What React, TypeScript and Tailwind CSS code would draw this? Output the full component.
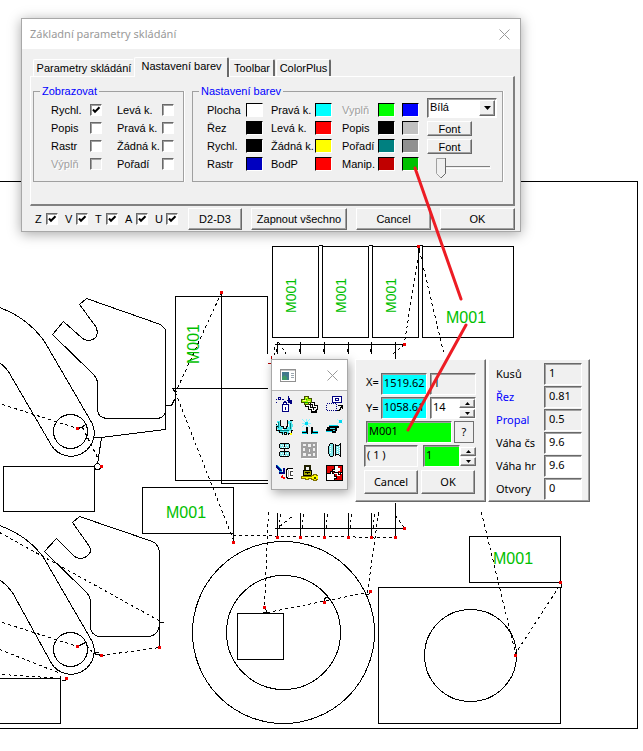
import clsx from 'clsx'
import { useState, type ReactNode } from 'react'

const RAISED =
  'border border-t-white border-l-white border-b-[#696969] border-r-[#696969] shadow-[inset_-1px_-1px_0_#a0a0a0] bg-[#f0f0f0]'
const SUNKEN =
  'border border-t-[#696969] border-l-[#696969] border-b-white border-r-white shadow-[inset_1px_1px_0_#a0a0a0]'
const DIALOG_FONT = "font-['Liberation_Sans',Arial,sans-serif] text-[11px] leading-[14px]"
const PANEL_FONT = "font-['Noto_Sans',Tahoma,sans-serif] text-[11px] leading-[14px]"

const TABS = ['Parametry skládání', 'Nastavení barev', 'Toolbar', 'ColorPlus']

const VISIBILITY = [
  { label: 'Rychl.', checked: true },
  { label: 'Levá k.' },
  { label: 'Popis' },
  { label: 'Pravá k.' },
  { label: 'Rastr' },
  { label: 'Žádná k.' },
  { label: 'Výplň', disabled: true },
  { label: 'Pořadí' },
]

const COLOR_ROWS = [
  [
    { label: 'Plocha', color: 'bg-white' },
    { label: 'Pravá k.', color: 'bg-[#00ffff]' },
    { label: 'Vyplň', color: 'bg-[#00ff00]', disabled: true },
    { label: '', color: 'bg-[#0000ff]' },
  ],
  [
    { label: 'Řez', color: 'bg-black' },
    { label: 'Levá k.', color: 'bg-[#ff0000]' },
    { label: 'Popis', color: 'bg-black' },
    { label: '', color: 'bg-[#c0c0c0]' },
  ],
  [
    { label: 'Rychl.', color: 'bg-black' },
    { label: 'Žádná k.', color: 'bg-[#ffff00]' },
    { label: 'Pořadí', color: 'bg-[#008080]' },
    { label: '', color: 'bg-[#909090]' },
  ],
  [
    { label: 'Rastr', color: 'bg-[#0000c0]' },
    { label: 'BodP', color: 'bg-[#ff0000]' },
    { label: 'Manip.', color: 'bg-[#c00000]' },
    { label: '', color: 'bg-[#00c000]' },
  ],
]

const COLOR_LABEL_WIDTHS = ['w-[39px]', 'w-[44px]', 'w-[36px]', 'w-0']

const STATS = [
  { label: 'Kusů', value: '1', readOnly: true },
  { label: 'Řez', value: '0.81', readOnly: true, blue: true },
  { label: 'Propal', value: '0.5', readOnly: true, blue: true },
  { label: 'Váha čs', value: '9.6' },
  { label: 'Váha hr', value: '9.6' },
  { label: 'Otvory', value: '0' },
]

const COMB_X = [277, 300, 324, 348, 371, 395]

const RED_POINTS = [
  [77, 428],
  [101, 466],
  [221, 292],
  [77, 646],
  [101, 655],
  [159, 647],
  [66, 678],
  [233, 542],
  [404, 344],
  [404, 528],
  [264, 607],
  [324, 602],
  [370, 591],
  [515, 655],
  [418, 246],
  [560, 582],
  ...COMB_X.map((x) => [x, 537]),
]

function Drawing() {
  return (
    <svg
      width="643"
      height="751"
      className="absolute top-0 left-0"
      shapeRendering="crispEdges"
      aria-label="Nesting plan"
    >
      <g transform="translate(0.5 0.5)" fill="none" stroke="#000">
        {/* sheet outline */}
        <path d="M-1 181H637V728H-1" />

        {/* arms with a hole */}
        <path d="M-1 307C18 314 34 327 44 341L90 420A23 23 0 0 1 51 445L12 378Q7 368 -1 362" />
        <circle cx="70" cy="431" r="17" />
        <path d="M-1 525C18 532 33 543 43 557L90 638A23 23 0 0 1 51 663L12 592Q7 585 -1 579" />
        <circle cx="70" cy="649" r="17" />

        {/* hooks */}
        <path d="M86 298L160 324L165 329V412Q162 418 156 418H106Q98 417 97 410V383Q97 378 92 373L52 334L63 321L82 338Q88 342 94 338Q98 335 96 327L79 304Z" />
        <path d="M79 516L152 541Q158 544 159 552V625Q157 635 149 636H98Q91 634 90 628V602Q90 596 85 591L44 551L56 538L74 556Q80 560 86 556Q92 552 89 546L72 522Z" />
        <path d="M165 405V429L101 437L97 464M93 437L101 437M159 620V647" />
        <path d="M165 405H171L174 399M85 424L81 427L77 428M85 642L77 646M93 653L101 655M93 652H98" />
        <circle cx="97" cy="466" r="3" />

        {/* rectangular parts */}
        <rect x="3" y="466" width="91" height="45" />
        <path d="M-1 678H60V723H-1M60 675V680M61 680H65" />
        <rect x="142" y="487" width="91" height="46" />
        <path d="M267 296H175V480H267M221 292V483H267M172 388H267M267 296V353M172 388L175 392" />
        <rect x="272" y="246" width="46" height="91" />
        <rect x="322" y="246" width="46" height="91" />
        <rect x="372" y="246" width="46" height="91" />
        <rect x="422" y="246" width="91" height="91" />
        <path d="M318 245H322M368 245H372M418 245H422" />
        <rect x="469" y="536" width="91" height="46" />
        <rect x="378" y="587" width="182" height="136" />
        <path d="M561 582V587" />
        <circle cx="470" cy="655" r="46" />
        <circle cx="283" cy="632" r="91" />
        <circle cx="283" cy="632" r="57" />
        <rect x="237" y="613" width="46" height="46" />

        {/* combs */}
        <path d="M274 344H404M274 528H404M395 353V359M395 502V512" />
        {COMB_X.map((x) => (
          <path key={x} d={`M${x} 341V353M${x} 512V537`} />
        ))}
        {COMB_X.slice(0, 5).map((x) => (
          <path key={x} strokeDasharray="3 3" d={`M${x + 2} 528L${x + 3} 512M${x - 1} 348V354`} />
        ))}
        <path d="M233 533V542M264 607L267 612H262M324 602V598Q327 596 329 599M370 591Q369 596 365 593" />

        {/* rapid moves */}
        <g strokeDasharray="3 3">
          <path d="M2 404L77 428M82 427L97 457" />
          <path d="M221 292L175 392M175 392L233 540" />
          <path d="M-1 532L162 622M2 622L77 646M-1 649L60 673M2 674L61 678" />
          <path d="M86 645L93 653M101 655L159 647" />
          <path d="M419 248L404 342M419 250L443 352M404 344L393 353" />
          <path d="M233 535L395 537M268 512L264 605M378 512L367 592L267 612" />
          <path d="M279 526L294 514M395 515L404 528M274 346V354M278 342L286 354" />
          <path d="M481 512L515 653L560 584" />
        </g>
        <path d="M158 622H163" />
        <path stroke="#b00000" d="M271 355V363H267" />
      </g>

      <g fill="#f00000">
        {RED_POINTS.map(([x, y]) => (
          <rect key={`${x}-${y}`} x={x - 1} y={y - 1} width="3" height="3" />
        ))}
      </g>

      <g fill="#00c000" className="font-['Liberation_Sans',Arial,sans-serif] text-[16px]">
        <text x="166" y="518">M001</text>
        <text x="446" y="323">M001</text>
        <text x="493" y="564">M001</text>
        <text transform="translate(199 364) rotate(-90)">M001</text>
        <g className="text-[14px]">
          <text transform="translate(296 313) rotate(-90)">M001</text>
          <text transform="translate(346 313) rotate(-90)">M001</text>
          <text transform="translate(396 313) rotate(-90)">M001</text>
        </g>
      </g>
    </svg>
  )
}

interface CheckProps {
  label: string
  checked?: boolean
  disabled?: boolean
  labelClass?: string
}

function Check({ label, checked = false, disabled = false, labelClass }: CheckProps) {
  return (
    <label className="flex h-[18px] items-center whitespace-nowrap">
      <span
        className={clsx(labelClass, disabled && 'text-[#a0a0a0] [text-shadow:1px_1px_0_#fff]')}
      >
        {label}
      </span>
      <span className="grid size-3 shrink-0">
        <input
          type="checkbox"
          defaultChecked={checked}
          disabled={disabled}
          className={clsx(
            'peer col-start-1 row-start-1 size-3 appearance-none',
            SUNKEN,
            disabled ? 'bg-[#f0f0f0]' : 'bg-white'
          )}
        />
        <svg
          viewBox="0 0 12 12"
          className="pointer-events-none col-start-1 row-start-1 hidden size-3 peer-checked:block"
        >
          <path d="M3 5.5L5 7.8L9.5 3.3" fill="none" stroke="#000" strokeWidth="2" />
        </svg>
      </span>
    </label>
  )
}

function PushButton({ children, className }: { children: ReactNode; className?: string }) {
  return (
    <button
      type="button"
      className={clsx('flex items-center justify-center whitespace-nowrap', RAISED, className)}
    >
      {children}
    </button>
  )
}

function CloseIcon() {
  return (
    <svg viewBox="0 0 11 11" className="size-[11px]">
      <path d="M.5 .5L10.5 10.5M10.5 .5L.5 10.5" stroke="#999" fill="none" />
    </svg>
  )
}

function LevelSlider() {
  const [level, setLevel] = useState(0)
  return (
    <div className="grid h-[22px] w-[56px]">
      <svg viewBox="0 0 56 22" className="col-start-1 row-start-1 h-[22px] w-[56px]">
        <path d="M6 9.5H55M6.5 9V11" stroke="#808080" strokeWidth="1" />
        <path d="M6 11.5H56V9" stroke="#fff" fill="none" />
        <g transform={`translate(${level * 0.44} 0)`}>
          <path d="M1.500 1.500H10.500V16.500L6 21L1.500 16.500Z" fill="#f0f0f0" stroke="#a0a0a0" />
          <path d="M10.500 1V16.500L6 21" fill="none" stroke="#696969" />
        </g>
      </svg>
      <input
        type="range"
        aria-label="Jas"
        value={level}
        onChange={(e) => setLevel(Number(e.target.value))}
        className="col-start-1 row-start-1 w-full opacity-0"
      />
    </div>
  )
}

function SettingsDialog() {
  return (
    <section
      className={clsx(
        'absolute top-[18px] left-[21px] w-[500px] border border-[#a8a8a8] bg-[#f0f0f0] pb-px shadow-[0_2px_12px_rgba(0,0,0,0.35)]',
        DIALOG_FONT
      )}
    >
      <header className="flex h-[30px] items-center justify-between bg-white pr-[10px] pl-2">
        <h1 className="font-['Noto_Sans','Segoe_UI',sans-serif] text-[11px] text-[#999]">
          Základní parametry skládání
        </h1>
        <button type="button" aria-label="Zavřít">
          <CloseIcon />
        </button>
      </header>

      <div role="tablist" className="flex h-[27px] items-end pl-[11px] whitespace-nowrap">
        {TABS.map((tab, i) => (
          <button
            key={tab}
            type="button"
            role="tab"
            aria-selected={i === 1}
            className={clsx(
              'rounded-t-xs border border-b-0 border-t-white border-l-white border-r-[#696969] pl-px',
              i === 0 && 'h-[17px] w-[101px] border-r-transparent',
              i === 1 && 'relative -mb-px h-5 w-[95px] border-r-2 bg-[#f0f0f0] pb-[3px]',
              i === 2 && 'h-[17px] w-[46px] border-r-2',
              i === 3 && 'ml-px h-[17px] w-[55px] border-r-2'
            )}
          >
            {tab}
          </button>
        ))}
      </div>

      <div className="mr-[5px] ml-2 flex h-[130px] items-start gap-2 border border-t-white border-r-2 border-b-2 border-l-white border-r-[#808080] border-b-[#808080] pt-[7px] pl-[2px]">
        <fieldset className="h-[98px] w-[151px] border border-[#a0a0a0] pl-[17px] shadow-[1px_0_0_#fff]">
          <legend className="-ml-[11px] px-[2px] text-[#0000ff]">Zobrazovat</legend>
          <div className="grid grid-cols-[66px_58px] pt-[3px]">
            {VISIBILITY.map((v, i) => (
              <Check key={v.label} {...v} labelClass={i % 2 === 0 ? 'w-[39px]' : 'w-[45px]'} />
            ))}
          </div>
        </fieldset>

        <fieldset className="h-[98px] w-[311px] border border-[#a0a0a0] pl-[14px] shadow-[1px_0_0_#fff]">
          <legend className="-ml-[8px] px-[2px] text-[#0000ff]">Nastavení barev</legend>
          <div className="flex gap-2">
            <div className="pt-[3px]">
              {COLOR_ROWS.map((row, r) => (
                <div key={r} className="grid h-[18px] grid-cols-[64px_71px_60px_17px] items-center">
                  {row.map((cell, c) => (
                    <div key={c} className="flex items-center whitespace-nowrap">
                      <span
                        className={clsx(
                          COLOR_LABEL_WIDTHS[c],
                          cell.disabled && 'text-[#a0a0a0] [text-shadow:1px_1px_0_#fff]'
                        )}
                      >
                        {cell.label}
                      </span>
                      <button
                        type="button"
                        aria-label={`Barva ${cell.label}`}
                        className={clsx(
                          'h-[14px] w-[17px] shrink-0 border border-t-black border-r-white border-b-white border-l-black',
                          cell.color
                        )}
                      />
                    </div>
                  ))}
                </div>
              ))}
            </div>

            <div className="flex flex-col items-start gap-[3px]">
              <div className={clsx('grid h-5 w-[70px] bg-white', SUNKEN)}>
                <select
                  aria-label="Barva pozadí"
                  className="col-start-1 row-start-1 appearance-none pb-[2px] pl-[2px] outline-none"
                >
                  <option>Bílá</option>
                </select>
                <span
                  className={clsx(
                    'pointer-events-none col-start-1 row-start-1 my-px mr-px flex w-4 items-center justify-center justify-self-end',
                    RAISED
                  )}
                >
                  <svg viewBox="0 0 7 4" className="h-1 w-[7px]">
                    <path d="M0 0H7L3.500 4Z" />
                  </svg>
                </span>
              </div>
              <PushButton className="h-[15px] w-[45px]">Font</PushButton>
              <PushButton className="h-[15px] w-[45px]">Font</PushButton>
              <div className="pl-2">
                <LevelSlider />
              </div>
            </div>
          </div>
        </fieldset>
      </div>

      <footer className="flex h-[24px] items-center pt-px pr-[5px] pl-[13px]">
        <div className="flex gap-[7px]">
          {['Z', 'V', 'T', 'A', 'U'].map((axis) => (
            <Check key={axis} label={axis} checked labelClass="w-[11px]" />
          ))}
        </div>
        <div className="flex grow items-center justify-between pl-[10px]">
          <PushButton className="h-[22px] w-[54px]">D2-D3</PushButton>
          <PushButton className="h-[22px] w-[96px]">Zapnout všechno</PushButton>
          <PushButton className="h-[22px] w-[75px]">Cancel</PushButton>
          <PushButton className="h-[22px] w-[75px]">OK</PushButton>
        </div>
      </footer>
    </section>
  )
}

const TOOL_ICONS: { name: string; art: ReactNode }[] = [
  {
    name: 'Sprej',
    art: (
      <>
        <path stroke="#000080" d="M2.500 1.500h2v2h-2z" />
        <path
          fill="#000080"
          d="M0 3h1v1h-1zM6 3h2v1h-2zM8 5h2v1h-2zM0 6h1v1h-1zM12 0h1v2h1v2h2v4h-2v-1h-2v-2h-1v-1h1z"
        />
        <path fill="#fff" stroke="#000080" d="M7.500 6.500h3v2h2v7h-6v-7h1z" />
        <path stroke="#000080" d="M6 8.500h6M9.500 11v3" />
      </>
    ),
  },
  {
    name: 'Přidat',
    art: (
      <>
        <path stroke="#000" strokeWidth="3" d="M4 9.500h4v3h3v3h5" />
        <path stroke="#000" strokeWidth="3" d="M9 7.500h3v3h4v3" />
        <path stroke="#fff" d="M5 9.500h3v3h3v2h3M10 7.500h2v3h3v2" />
        <path fill="#a8f000" stroke="#405000" d="M3.500 .5h4v2h3v4h-3v2h-4v-2h-3v-3h3z" />
        <path stroke="#ffff80" d="M5 1.500h1M2 4.500h3M7 5.500h2" />
        <path stroke="#00b000" d="M5 3.500h1M4 6.500h3" />
      </>
    ),
  },
  {
    name: 'Přesun výřezu',
    art: (
      <>
        <rect x="6.500" y=".5" width="9" height="6" fill="#fff" stroke="#000080" />
        <rect x="9.500" y="2.500" width="3" height="2" fill="none" stroke="#000080" />
        <rect
          x=".5"
          y="7.500"
          width="10"
          height="7"
          fill="none"
          stroke="#000080"
          strokeDasharray="1 1"
        />
        <path fill="none" stroke="#000" d="M11 14.500h2v-1h1v-2h1v-2M12 9.500h5M16.500 9v4" />
      </>
    ),
  },
  {
    name: 'Ozubení',
    art: (
      <>
        <path
          fill="#50e8f0"
          d="M1 2h4v6h2v2h3v-2h1v-6h5v3h1v3h-1v4h-3v3h-3v-2h-2v2h-3v-2h-3v-3h-2v-4h1z"
        />
        <path
          stroke="#000"
          d="M4.500 1v6M5 7.500h2v2h3v-2h2M11.500 1v6M14 1.500h3v3M0 5.500h2v2h-2v4h3v2h3v2M17 8v3h-2v3h-3v2M8 13.500h2v2h-2z"
        />
        <path stroke="#008080" d="M2.500 3v6M14.500 4v6M4 11.500h9" />
        <path stroke="#fff" d="M1.500 4v2M6 10.500h2M12.500 5v3" />
        <path fill="#ff0" d="M14 14h2v2h-2z" />
      </>
    ),
  },
  {
    name: 'Rohy',
    art: (
      <>
        <path stroke="#90f4ff" d="M1 0l8 8M9 0l-8 8M5 0v9M1 4.500h9" />
        <path fill="#00d8f0" d="M4 3h3v3h-3z" />
        <path fill="#000" d="M5 8h2v7h-6v-2h4zM10 8h2v5h5v2h-7z" />
        <path fill="#00e0f0" d="M1 12h4v1h-4zM12 12h5v1h-5zM1 14h5v1h-5zM11 14h6v1h-6z" />
      </>
    ),
  },
  {
    name: 'Potrubí',
    art: (
      <>
        <path stroke="#b0f8ff" d="M11 0l6 5M17 0l-6 5" />
        <path fill="#00d8f0" d="M13 1h3v3h-3zM3 6h9v1h-9zM0 12h6v1h-6z" />
        <path fill="#000" d="M3 7h10v2h-2v3h-1v2h-4v-2h-6v-2h1v-2h2z" />
        <path fill="#40e0f0" d="M4 9h5v1h-5zM7 11h2v1h-2z" />
      </>
    ),
  },
  {
    name: 'Zrcadlit svisle',
    art: (
      <>
        <path
          fill="#80e8ec"
          stroke="#000"
          d="M4.500 1.500h8l1 1v3l-1 1h-8l-1-1v-3zM4.500 9.500h8l1 1v3l-1 1h-8l-1-1v-3z"
        />
        <path stroke="#000" d="M8.500 1v14" />
        <path stroke="#fff" strokeDasharray="1 1" d="M5 3.500h7M5 11.500h7M6 5.500h6M6 13.500h6" />
      </>
    ),
  },
  {
    name: 'Mřížka',
    art: (
      <>
        <path fill="#fff" d="M1 1h16v16h-16z" />
        <path fill="#a0a0a0" d="M0 0h16v16h-16z" />
        <path
          fill="#f0f0f0"
          d="M2 2h3v2h-3zM7 2h3v3h-3zM12 2h2v2h-2zM2 6h2v3h-2zM8 7h1v3h-1zM12 6h2v3h-2zM2 11h3v3h-3zM7 12h3v2h-3zM12 11h2v3h-2z"
        />
      </>
    ),
  },
  {
    name: 'Zrcadlit vodorovně',
    art: (
      <>
        <path fill="#80e8ec" stroke="#000" d="M4.500 1.500h2l1 1v11l-1 1h-2l-2-3v-7z" />
        <path fill="#80e8ec" stroke="#000" d="M9.500 2.500l1 1h2l2-2v13l-2-2h-2l-1 1z" />
        <path stroke="#fff" strokeDasharray="1 1" d="M4.500 4v8M11.500 5v7M13.500 4v9" />
      </>
    ),
  },
  {
    name: 'Nájezd',
    art: (
      <>
        <path stroke="#000080" strokeWidth="2" d="M0 1l6 6M8 3v5h-5" />
        <path stroke="#00b0e0" d="M1 0l5 5M3 6.500h3" />
        <path fill="#f00" d="M6 10h1v2h2v2h-2v-1h-2v-2h1z" />
        <path fill="#fff" stroke="#000" d="M17 3.500h-5l-2 2v6l2 2h5" />
        <path stroke="#404040" d="M17 6.500h-3v4h3" />
        <path stroke="#b0b0b0" d="M12.500 5v7" />
      </>
    ),
  },
  {
    name: 'Zámek',
    art: (
      <>
        <path stroke="#202000" strokeWidth="2" d="M4 6v-5h5v5" />
        <path fill="#a0a000" stroke="#000" d="M2.500 5.500h8v5h-8z" />
        <path stroke="#000" d="M4 7.500h5M6.500 7v2" />
        <path fill="#ff0" stroke="#807000" d="M0 11.500h10v-1h2v-1h3v1h2v4h-2v1h-3v-1h-2v-1h-3v1h-3v-1h-4z" />
        <path fill="#404000" d="M13 12h2v2h-2z" />
      </>
    ),
  },
  {
    name: 'Skládat',
    art: (
      <>
        <path fill="#e00000" d="M0 0h17v16h-17z" />
        <path fill="#fff" d="M8 1h4v2h2v3h-2v2h-3v-1h-3v-3h2zM1 8h3v-2h2v2h2v3h2v2h-2v2h-7z" />
        <path stroke="#fff" d="M8 8.500h3v2h2v-2h3" />
        <path
          stroke="#000"
          d="M.5 .5h16v15h-16zM8.500 1v3h-2v2h2v2M1 8.500h3v-2h2v2h2M8.500 9v2h2v2h-2v2M9 7.500h3v2h2v-2h2"
        />
      </>
    ),
  },
]

function ToolBox() {
  return (
    <section className="absolute top-[359px] left-[271px] w-[77px] border border-[#a8a8a8] bg-[#f0f0f0] shadow-[2px_3px_10px_rgba(0,0,0,0.35)]">
      <header className="flex h-[31px] items-center justify-between border-b border-[#b4b4b4] bg-white pr-[9px] pl-2">
        <svg viewBox="0 0 16 13" className="h-[13px] w-4" shapeRendering="crispEdges">
          <path fill="#fff" stroke="#909090" d="M.5 .5h15v12h-15z" />
          <path fill="#c8c8c8" d="M1 1h14v1h-14z" />
          <path fill="#40788c" d="M2 3h7v8h-7z" />
          <path fill="#3c9868" d="M2 8l3-2 2 3v2h-5z" />
          <path fill="#9ca8b0" d="M11 4h3v1h-3zM11 6h3v1h-3zM11 8h3v1h-3z" />
        </svg>
        <button type="button" aria-label="Zavřít nástroje">
          <CloseIcon />
        </button>
      </header>
      <div className="grid grid-cols-3 gap-x-2 gap-y-[6px] px-1 pt-[5px] pb-[7px]">
        {TOOL_ICONS.map(({ name, art }) => (
          <button key={name} type="button" aria-label={name}>
            <svg
              viewBox="0 0 17 17"
              className="size-[17px]"
              fill="none"
              shapeRendering="crispEdges"
            >
              {art}
            </svg>
          </button>
        ))}
      </div>
    </section>
  )
}

function TextBox({
  label,
  value,
  className,
  readOnly,
}: {
  label: string
  value: string
  className?: string
  readOnly?: boolean
}) {
  return (
    <input
      type="text"
      aria-label={label}
      defaultValue={value}
      readOnly={readOnly}
      className={clsx('h-[22px] min-w-0 pb-[3px] outline-none', SUNKEN, className)}
    />
  )
}

function Spinner({ label }: { label: string }) {
  return (
    <div className="flex w-4 shrink-0 flex-col">
      <PushButton className="h-[9px] w-4">
        <svg viewBox="0 0 5 3" className="h-[3px] w-[5px]" role="img" aria-label={`${label} více`}>
          <path d="M0 3H5L2.500 0Z" />
        </svg>
      </PushButton>
      <PushButton className="mt-px h-[9px] w-4">
        <svg viewBox="0 0 5 3" className="h-[3px] w-[5px]" role="img" aria-label={`${label} méně`}>
          <path d="M0 0H5L2.500 3Z" />
        </svg>
      </PushButton>
    </div>
  )
}

function PositionPanel() {
  return (
    <form
      onSubmit={(e) => e.preventDefault()}
      className={clsx(
        'absolute top-[359px] left-[355px] flex w-[131px] flex-col gap-[2px] pt-[13px] pr-[9px] pb-[7px] pl-2',
        RAISED,
        PANEL_FONT
      )}
    >
      <div className="flex items-center">
        <span className="w-[17px] pb-1 pl-[2px]">X=</span>
        <TextBox label="X" value="1519.62" className="w-[47px] bg-[#00ffff] pl-[2px]" />
        <TextBox label="Řada" value="1" readOnly className="ml-[3px] w-[46px] bg-[#f0f0f0] pl-[2px]" />
      </div>
      <div className="flex items-center">
        <span className="w-[17px] pl-[2px]">Y=</span>
        <TextBox label="Y" value="1058.61" className="w-[47px] bg-[#00ffff] pl-[2px]" />
        <div className={clsx('ml-[3px] flex h-[22px] w-[46px] items-center bg-white', SUNKEN)}>
          <input
            type="text"
            aria-label="Výška"
            defaultValue="14"
            className="min-w-0 grow pb-[2px] pl-[2px] outline-none"
          />
          <Spinner label="Výška" />
        </div>
      </div>
      <div className="flex gap-[2px] pl-[2px]">
        <TextBox label="Popis dílu" value="M001" className="w-[86px] bg-[#00ff00] pl-[2px]" />
        <button type="button" className="h-[22px] w-5 border border-[#707070] bg-[#f0f0f0]">
          ?
        </button>
      </div>
      <div className="flex items-center">
        <TextBox label="Skupina" value="( 1 )" readOnly className="w-[54px] bg-[#f0f0f0] pl-[2px]" />
        <TextBox label="Počet" value="1" className="ml-[5px] w-[37px] bg-[#00ff00] pl-[2px]" />
        <Spinner label="Počet" />
      </div>
      <div className="flex gap-[3px] pt-px">
        <PushButton className="h-6 w-[54px]">Cancel</PushButton>
        <PushButton className="h-6 w-[54px]">OK</PushButton>
      </div>
    </form>
  )
}

function StatsPanel() {
  return (
    <section
      className={clsx(
        'absolute top-[359px] left-[488px] flex w-[102px] flex-col gap-px pt-[3px] pr-[7px] pb-px pl-[7px]',
        RAISED,
        PANEL_FONT
      )}
    >
      {STATS.map((s) => (
        <div key={s.label} className="flex items-center justify-between">
          <span className={clsx('whitespace-nowrap', s.blue && 'text-[#0000ff]')}>{s.label}</span>
          <TextBox
            label={s.label}
            value={s.value}
            readOnly={s.readOnly}
            className={clsx('w-[38px] pl-1', s.readOnly ? 'bg-[#f0f0f0]' : 'bg-white')}
          />
        </div>
      ))}
    </section>
  )
}

export default function App() {
  return (
    <main className="relative min-h-screen w-full overflow-hidden bg-white text-black">
      <Drawing />
      <SettingsDialog />
      <ToolBox />
      <PositionPanel />
      <StatsPanel />

      {/* pointers from the colour swatch to the part label and its text field */}
      <svg width="643" height="751" className="pointer-events-none absolute top-0 left-0">
        <path
          d="M415 168L461 299M466 325L408 430"
          stroke="#ed1c24"
          strokeWidth="3"
          strokeLinecap="round"
        />
      </svg>
    </main>
  )
}
